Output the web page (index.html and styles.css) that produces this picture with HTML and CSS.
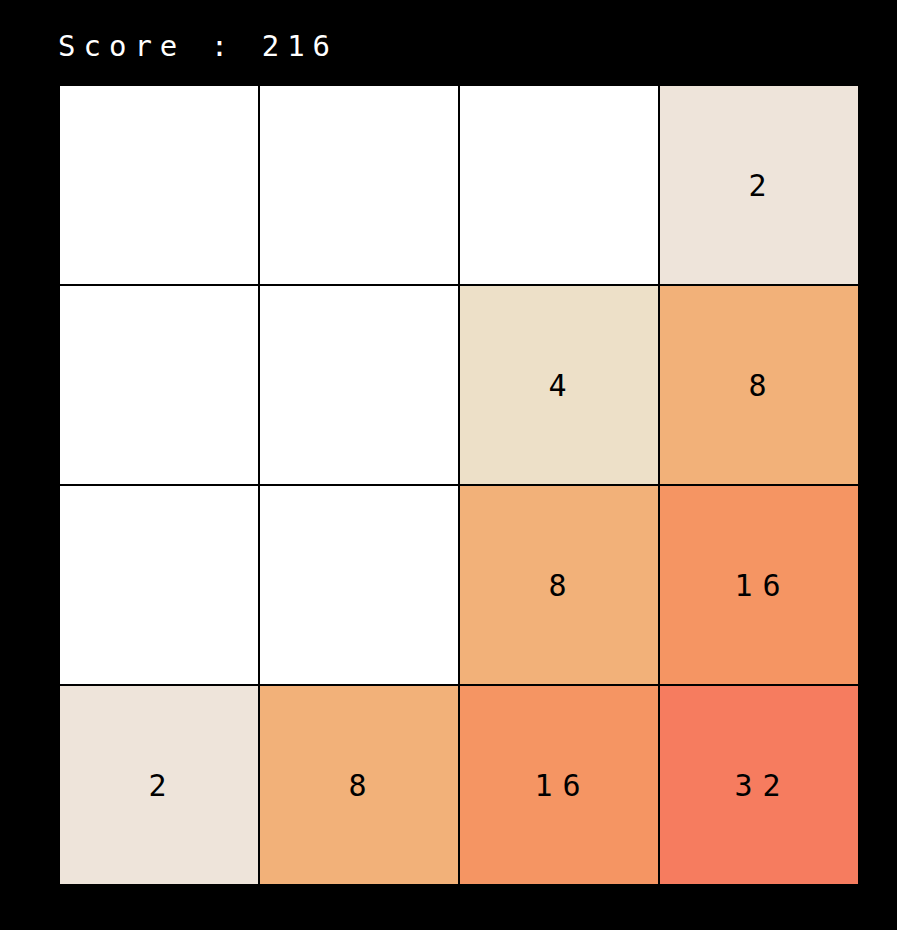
FILE: index.html
```html
<!DOCTYPE html>
<html>
<head>
<meta charset="utf-8">
<link rel="stylesheet" href="styles.css">
</head>
<body>
<div class="app">
  <div class="score">Score : 216</div>
  <div class="board">
    <div class="cell"></div>
    <div class="cell"></div>
    <div class="cell"></div>
    <div class="cell t2">2</div>
    <div class="cell"></div>
    <div class="cell"></div>
    <div class="cell t4">4</div>
    <div class="cell t8">8</div>
    <div class="cell"></div>
    <div class="cell"></div>
    <div class="cell t8">8</div>
    <div class="cell t16">16</div>
    <div class="cell t2">2</div>
    <div class="cell t8">8</div>
    <div class="cell t16">16</div>
    <div class="cell t32">32</div>
  </div>
</div>
</body>
</html>
```
FILE: styles.css
```css
html, body {
  margin: 0;
  padding: 0;
  background: #000;
}
.app {
  padding: 29px 0 0 59px;
  display: flex;
  flex-direction: column;
  align-items: flex-start;
}
.score {
  font-family: "DejaVu Sans Mono", "Liberation Mono", monospace;
  font-size: 29px;
  line-height: 34px;
  letter-spacing: 8px;
  color: #fff;
  margin: 0 0 22px -1px;
}
.board {
  display: grid;
  grid-template-columns: repeat(4, 200px);
  grid-template-rows: repeat(4, 200px);
}
.cell {
  box-sizing: border-box;
  border: 1px solid #000;
  background: #fff;
  display: flex;
  align-items: center;
  justify-content: center;
  font-family: "DejaVu Sans Mono", "Liberation Mono", monospace;
  font-size: 30px;
  letter-spacing: 10px;
  text-indent: 7px;
  color: #000;
}
.t2 { background: #eee4da; }
.t4 { background: #ede0c8; }
.t8 { background: #f2b179; }
.t16 { background: #f59563; }
.t32 { background: #f67c5f; }
```
